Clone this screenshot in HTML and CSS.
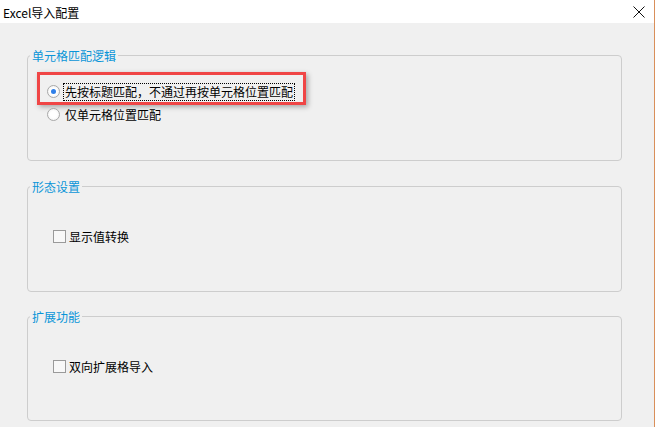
FILE: index.html
```html
<!DOCTYPE html>
<html lang="zh">
<head>
<meta charset="utf-8">
<title>Excel导入配置</title>
<link rel="stylesheet" href="styles.css">
</head>
<body>
<div class="window">
  <div class="titlebar">
    <span class="title">Excel导入配置</span>
    <svg class="close" width="12" height="12" viewBox="0 0 12 12"><path d="M0.5 0.5 L11.5 11.5 M11.5 0.5 L0.5 11.5" stroke="#111" stroke-width="1" fill="none"/></svg>
  </div>
  <div class="content">
    <div class="group g1">
      <span class="group-title">单元格匹配逻辑</span>
      <div class="option highlighted">
        <span class="radio checked"></span>
        <span class="label focus">先按标题匹配，不通过再按单元格位置匹配</span>
        <span class="mark"></span>
      </div>
      <div class="option">
        <span class="radio"></span>
        <span class="label">仅单元格位置匹配</span>
      </div>
    </div>
    <div class="group g2">
      <span class="group-title">形态设置</span>
      <div class="check-row">
        <span class="checkbox"></span>
        <span class="label">显示值转换</span>
      </div>
    </div>
    <div class="group g3">
      <span class="group-title">扩展功能</span>
      <div class="check-row">
        <span class="checkbox"></span>
        <span class="label">双向扩展格导入</span>
      </div>
    </div>
  </div>
</div>
</body>
</html>
```
FILE: styles.css
```css
html, body {
  margin: 0;
  padding: 0;
}
body {
  width: 655px;
  height: 427px;
  overflow: hidden;
  background: #f0f0f0;
  font-family: "Noto Sans CJK SC", "Noto Sans", sans-serif;
  font-size: 12px;
  color: #000;
}
.window {
  width: 655px;
  height: 427px;
  box-sizing: border-box;
  border-right: 1px solid #d98f5a;
  background: #f0f0f0;
}
.titlebar {
  height: 23px;
  background: #fff;
  display: flex;
  align-items: center;
  justify-content: space-between;
  padding: 0 9px 0 3px;
}
.title {
  font-size: 12px;
  line-height: 23px;
  padding-top: 1px;
}
.close {
  display: block;
}
.content {
  display: flex;
  flex-direction: column;
  gap: 25px;
  padding: 32px 0 0 27px;
}
.group {
  position: relative;
  width: 595px;
  box-sizing: border-box;
  border: 1px solid #cdcdcd;
  border-radius: 4px;
}
.g1 { height: 106px; padding: 24px 0 0 19px; }
.g2 { height: 106px; padding: 38px 0 0 25px; }
.g3 { height: 105px; padding: 38px 0 0 25px; margin-top: -1px; }
.group-title {
  position: absolute;
  top: -8px;
  left: 2px;
  padding: 0 2px;
  background: #f0f0f0;
  color: #0a95d8;
  line-height: 16px;
}
.option, .check-row {
  display: flex;
  align-items: center;
  height: 23px;
  position: relative;
}
.radio {
  width: 13px;
  height: 13px;
  box-sizing: border-box;
  border-radius: 50%;
  border: 1px solid #a8a8a8;
  background: radial-gradient(circle, #ffffff 40%, #ececec 100%);
  margin-right: 5px;
  position: relative;
  flex: none;
}
.radio.checked::after {
  content: "";
  position: absolute;
  left: 3px;
  top: 3px;
  width: 5px;
  height: 5px;
  border-radius: 50%;
  background: #2f7fe8;
}
.label {
  line-height: 16px;
  white-space: nowrap;
}
.focus {
  outline: 1px dotted #000;
  outline-offset: 0;
  margin-left: -1px;
  padding: 0 1px;
}
.mark {
  position: absolute;
  left: -10px;
  top: -8px;
  width: 269px;
  height: 33px;
  box-sizing: border-box;
  border: 3px solid #f04646;
  box-shadow: 2px 2px 5px rgba(0, 0, 0, 0.3);
}
.checkbox {
  width: 13px;
  height: 13px;
  box-sizing: border-box;
  border: 1px solid #9a9a9a;
  background: #f8f8f8;
  margin-right: 3px;
  flex: none;
}
```
